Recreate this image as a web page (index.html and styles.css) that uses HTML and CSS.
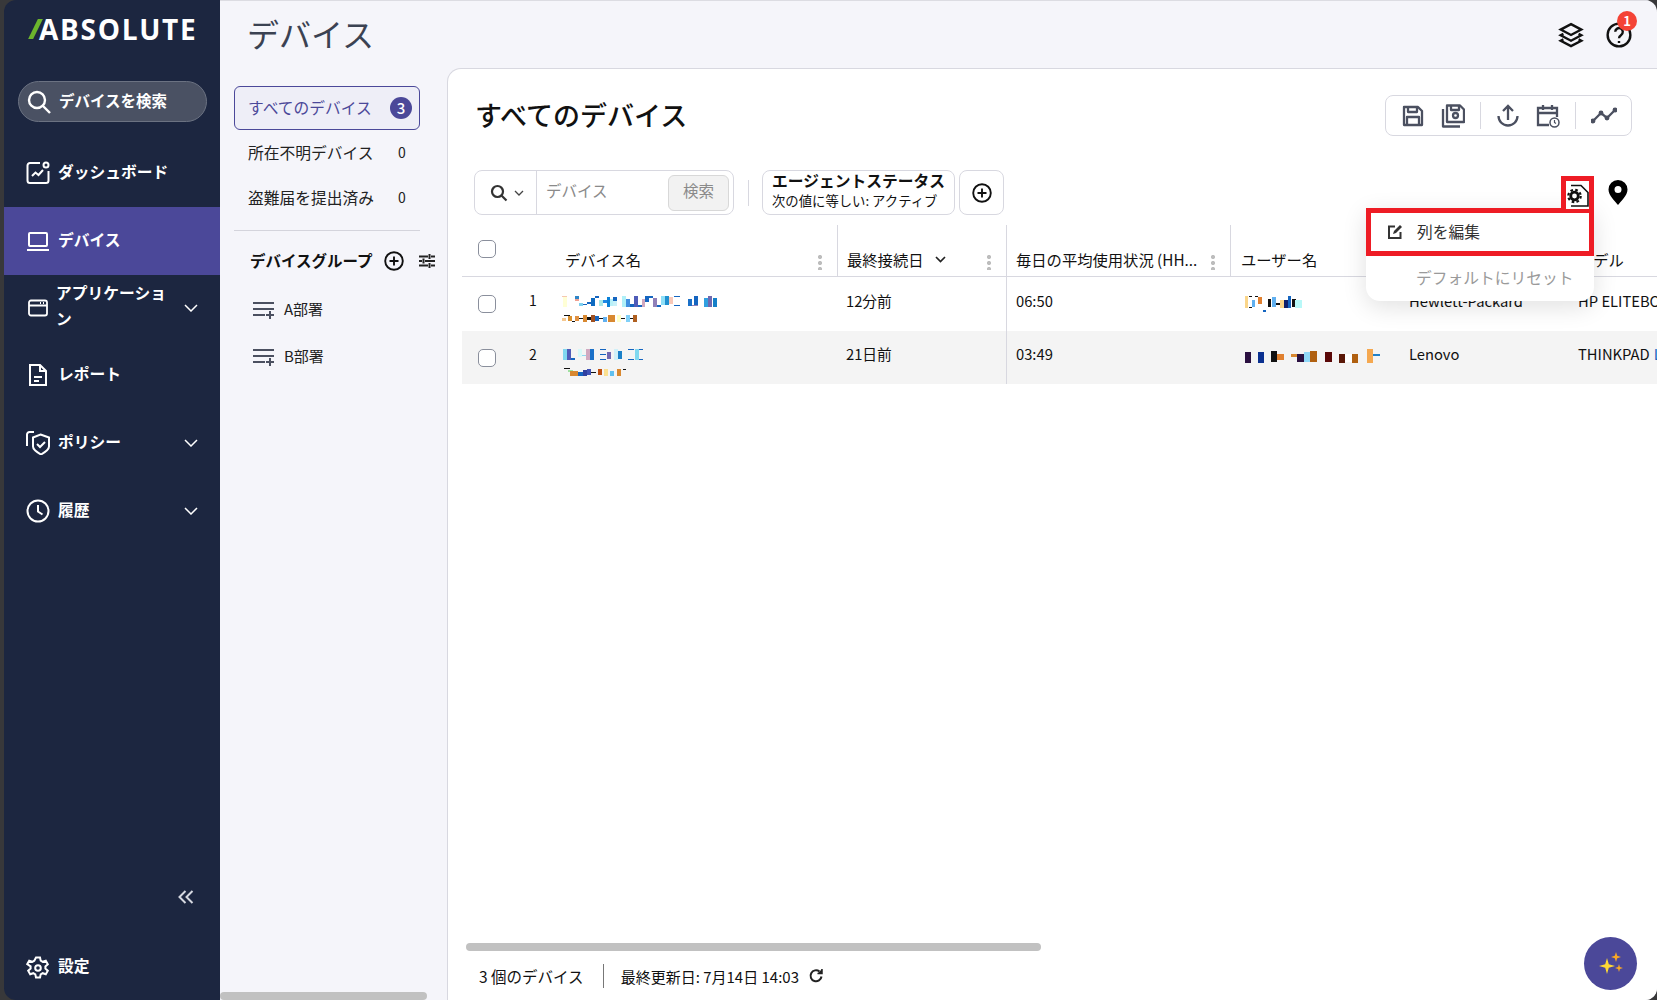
FILE: index.html
```html
<!DOCTYPE html>
<html lang="ja">
<head>
    <meta charset="UTF-8">
    <title>デバイス</title>
    <link rel="stylesheet" href="styles.css">
</head>
<body>
    <div class="window">
        <!-- Sidebar -->
        <aside class="sidebar">
            <div class="logo"><span class="logo-slash"></span><span>ABSOLUTE</span></div>
            <div class="side-search">
                <svg width="26" height="26" viewBox="0 0 26 26" fill="none" stroke="#fff" stroke-width="2.4"><circle cx="11" cy="11" r="8"/><path d="M17 17l7 7"/></svg>
                <span>デバイスを検索</span>
            </div>
            <nav class="nav">
                <a class="nav-item">
                    <svg class="nav-icon" viewBox="0 0 24 24" fill="none" stroke="#fff" stroke-width="2"><path d="M14 2H4a2.500 2.500 0 0 0-2.500 2.500v15A2.500 2.500 0 0 0 4 22h16a2.500 2.500 0 0 0 2.500-2.500V10"/><circle cx="20" cy="4" r="2.500"/><path d="M6 15l3.500-3.500 3 2.500 4.500-5"/></svg>
                    <span class="nav-label">ダッシュボード</span>
                </a>
                <a class="nav-item active">
                    <svg class="nav-icon" viewBox="0 0 24 24" fill="none" stroke="#fff" stroke-width="2"><rect x="3" y="4" width="18" height="13" rx="1"/><path d="M1 21h22"/></svg>
                    <span class="nav-label">デバイス</span>
                </a>
                <a class="nav-item app-item">
                    <svg class="nav-icon" viewBox="0 0 24 24" fill="none" stroke="#fff" stroke-width="1.800"><rect x="3" y="4.500" width="18" height="15" rx="2"/><path d="M3 9.500h18M14 7h1M17 7h1"/></svg>
                    <span class="nav-label">アプリケーション</span>
                    <svg class="chevron" viewBox="0 0 14 8" fill="none" stroke="#fff" stroke-width="1.500"><path d="M1 1l6 6 6-6"/></svg>
                </a>
                <a class="nav-item">
                    <svg class="nav-icon" viewBox="0 0 24 24" fill="none" stroke="#fff" stroke-width="2"><path d="M4 2h10l6 6v14H4zM14 2v6h6M8 14h8M8 18h5"/></svg>
                    <span class="nav-label">レポート</span>
                </a>
                <a class="nav-item">
                    <svg class="nav-icon" viewBox="0 0 24 24" fill="none" stroke="#fff" stroke-width="2"><path d="M14.500 3.500L23 6.500v9c0 3-3.500 5.500-8 8-4.500-2.500-8-5-8-8v-9z"/><path d="M11 13l3 3 5-5"/><path d="M8 1H3.500A2.500 2.500 0 0 0 1 3.500V15"/></svg>
                    <span class="nav-label">ポリシー</span>
                    <svg class="chevron" viewBox="0 0 14 8" fill="none" stroke="#fff" stroke-width="1.500"><path d="M1 1l6 6 6-6"/></svg>
                </a>
                <a class="nav-item">
                    <svg class="nav-icon" viewBox="0 0 24 24" fill="none" stroke="#fff" stroke-width="2"><circle cx="12" cy="12" r="10.500"/><path d="M12 6v6.500l4.500 3"/></svg>
                    <span class="nav-label">履歴</span>
                    <svg class="chevron" viewBox="0 0 14 8" fill="none" stroke="#fff" stroke-width="1.500"><path d="M1 1l6 6 6-6"/></svg>
                </a>
            </nav>
            <div class="side-bottom">
                <svg class="collapse" width="16" height="14" viewBox="0 0 16 14" fill="none" stroke="#d5d8e0" stroke-width="2"><path d="M7.500 1L1.500 7l6 6M14.500 1l-6 6 6 6"/></svg>
                <a class="nav-item settings">
                    <svg class="nav-icon" viewBox="0 0 24 24" fill="none" stroke="#fff" stroke-width="2"><path d="M10 1.500h4l.7 3.200 2 1.100 3.100-1 2 3.400-2.400 2.200v2.200l2.400 2.200-2 3.400-3.100-1-2 1.100-.7 3.200h-4l-.7-3.200-2-1.100-3.100 1-2-3.400 2.400-2.200v-2.200L1.200 8.200l2-3.400 3.100 1 2-1.100z"/><circle cx="12" cy="12" r="2.800"/></svg>
                    <span class="nav-label">設定</span>
                </a>
            </div>
        </aside>

        <div class="content">
            <!-- Top bar -->
            <header class="topbar">
                <h1>デバイス</h1>
                <div class="top-icons">
                    <svg width="26" height="26" viewBox="0 0 24 24" fill="none" stroke="#111" stroke-width="2.200"><path d="M12 2l9.500 5-9.500 5-9.500-5z"/><path d="M5 11l-2.500 1.300 9.500 5 9.500-5L19 11"/><path d="M5 16l-2.500 1.300 9.500 5 9.500-5L19 16"/></svg>
                    <div class="help">
                        <svg width="26" height="26" viewBox="0 0 24 24" fill="none" stroke="#111" stroke-width="2.200"><circle cx="12" cy="12" r="10.500"/><path d="M8.500 9a3.500 3.500 0 1 1 5.500 3c-1.300.9-2 1.500-2 3"/><path d="M12 17.500v1.800"/></svg>
                        <span class="help-badge">1</span>
                    </div>
                </div>
            </header>

            <div class="content-body">
                <!-- Device list panel -->
                <div class="subnav">
                    <div class="sub-item selected"><span class="sub-text">すべてのデバイス</span><span class="count-badge">3</span></div>
                    <div class="sub-item"><span class="sub-text">所在不明デバイス</span><span class="count">0</span></div>
                    <div class="sub-item"><span class="sub-text">盗難届を提出済み</span><span class="count">0</span></div>
                    <div class="sub-divider"></div>
                    <div class="group-head">
                        <span class="group-text">デバイスグループ</span>
                        <svg width="20" height="20" viewBox="0 0 20 20" fill="none" stroke="#111" stroke-width="1.900"><circle cx="10" cy="10" r="8.800"/><path d="M10 5.500v9M5.500 10h9"/></svg>
                        <svg class="sliders" width="16" height="16" viewBox="0 0 16 16" fill="none" stroke="#222" stroke-width="2"><path d="M0 3.500h9M12 3.500h4M10.500 1v5M0 8h3M6 8h10M4.500 5.500v5M0 12.500h9M12 12.500h4M10.500 10v5"/></svg>
                    </div>
                    <div class="group-item">
                        <svg width="22" height="18" viewBox="0 0 22 18" fill="none" stroke="#4b5060" stroke-width="2"><path d="M0 2h21M0 8h21M0 14h12M17 10v8M13 14h8"/></svg>
                        <span class="group-text">A部署</span>
                    </div>
                    <div class="group-item">
                        <svg width="22" height="18" viewBox="0 0 22 18" fill="none" stroke="#4b5060" stroke-width="2"><path d="M0 2h21M0 8h21M0 14h12M17 10v8M13 14h8"/></svg>
                        <span class="group-text">B部署</span>
                    </div>
                    <div class="panel-scroll"></div>
                </div>

                <!-- Main card -->
                <main class="card">
                    <div class="card-head">
                        <h2>すべてのデバイス</h2>
                        <div class="toolbar">
                            <svg width="24" height="24" viewBox="0 0 24 24" fill="none" stroke="#4b5060" stroke-width="2.300" stroke-linejoin="round"><path d="M3 3h14l4 4v14H3z"/><path d="M7 3v5h9V3M6 21v-8h12v8"/></svg>
                            <svg width="24" height="24" viewBox="0 0 24 24" fill="none" stroke="#4b5060" stroke-width="2.300" stroke-linejoin="round"><path d="M6 1.500h13l4 4V18H6z"/><path d="M10 2v4h8V2"/><circle cx="14.500" cy="11.500" r="2.500"/><path d="M2 5v17.500h17"/></svg>
                            <span class="tool-sep"></span>
                            <svg width="24" height="24" viewBox="0 0 24 24" fill="none" stroke="#4b5060" stroke-width="2.300"><path d="M12 16V2M7 7l5-5 5 5"/><path d="M2.500 12a9.500 9.500 0 0 0 19 0"/></svg>
                            <svg width="24" height="24" viewBox="0 0 24 24" fill="none" stroke="#4b5060" stroke-width="2.300"><path d="M13 21H2V4h19v9M2 9h19M7 1v5M16 1v5"/><circle cx="18.500" cy="18.500" r="4.500" fill="#fff" stroke-width="1.500"/><path d="M18.500 16v2.500l1.500 1" stroke-width="1.200"/></svg>
                            <span class="tool-sep"></span>
                            <svg width="26" height="24" viewBox="0 0 26 24" fill="none" stroke="#4b5060" stroke-width="2.300" stroke-linecap="round"><path d="M2 17l8-8 6 5 8-8"/><circle cx="2" cy="17" r="1.300" fill="#4b5060"/><circle cx="10" cy="9" r="1.300" fill="#4b5060"/><circle cx="16" cy="14" r="1.300" fill="#4b5060"/><circle cx="24" cy="6" r="1.300" fill="#4b5060"/></svg>
                        </div>
                    </div>

                    <div class="filter-row">
                        <div class="search-box">
                            <div class="search-type">
                                <svg width="18" height="18" viewBox="0 0 18 18" fill="none" stroke="#333" stroke-width="2.200"><circle cx="7.500" cy="7.500" r="5.500"/><path d="M11.500 11.500l5 5"/></svg>
                                <svg width="10" height="6" viewBox="0 0 10 6" fill="none" stroke="#444" stroke-width="1.300"><path d="M1 1l4 4 4-4"/></svg>
                            </div>
                            <span class="search-input">デバイス</span>
                            <button class="search-btn">検索</button>
                        </div>
                        <span class="filter-sep"></span>
                        <div class="chip">
                            <strong>エージェントステータス</strong>
                            <span>次の値に等しい: アクティブ</span>
                        </div>
                        <div class="chip-add">
                            <svg width="20" height="20" viewBox="0 0 20 20" fill="none" stroke="#111" stroke-width="1.900"><circle cx="10" cy="10" r="8.800"/><path d="M10 5.500v9M5.500 10h9"/></svg>
                        </div>
                        <div class="filter-right">
                            <div class="gear-wrap">
                                <svg width="23" height="23" viewBox="0 0 23 23" fill="none" stroke="#111" stroke-width="1.600"><path d="M5 1.500h10l7 7v13.500H5"/><circle cx="8.500" cy="12" r="8" fill="#fff" stroke="none"/><circle cx="8.500" cy="12" r="3.800" stroke-width="2.800"/><circle cx="8.500" cy="12" r="6.200" stroke-width="2.200" stroke-dasharray="2.600 2.270"/></svg>
                            </div>
                            <svg class="pin" width="20" height="25" viewBox="0 0 20 25"><path fill-rule="evenodd" fill="#000" d="M10 0a9.500 9.500 0 0 1 9.500 9.500C19.500 15.500 13 21 10 25 7 21 .5 15.500.5 9.500A9.500 9.500 0 0 1 10 0zm0 6a3.500 3.500 0 1 0 0 7 3.500 3.500 0 0 0 0-7z"/></svg>
                        </div>
                    </div>

                    <div class="table">
                        <div class="tr th">
                            <div class="td check"><span class="box"></span></div>
                            <div class="td"></div>
                            <div class="td name-head">デバイス名<span class="dots"></span></div>
                            <div class="td sep col-last">最終接続日
                                <svg class="sort" width="11" height="7" viewBox="0 0 11 7" fill="none" stroke="#222" stroke-width="1.700"><path d="M1 1l4.500 4.500L10 1"/></svg>
                                <span class="dots"></span>
                            </div>
                            <div class="td sep col-avg">毎日の平均使用状況 (HH...<span class="dots"></span></div>
                            <div class="td sep col-user">ユーザー名</div>
                            <div class="td col-maker">メーカー</div>
                            <div class="td col-model">モデル</div>
                        </div>
                        <div class="tr">
                            <div class="td check"><span class="box"></span></div>
                            <div class="td num">1</div>
                            <div class="td">
                                <div class="masked">
                                    <svg width="164" height="11" viewBox="0 0 164 11"><rect x="3" y="0" width="4" height="11" fill="#ffffd6"/><rect x="0" y="0" width="7" height="1" fill="#f5c8b0"/><rect x="15" y="0" width="4" height="3" fill="#2e86c8"/><rect x="15" y="3" width="4" height="2" fill="#f0a090"/><rect x="19" y="7" width="4" height="3" fill="#7fd0f0"/><rect x="23" y="8" width="4" height="1" fill="#1565c0"/><rect x="27" y="6" width="4" height="2" fill="#1565c0"/><rect x="31" y="2" width="4" height="8" fill="#0d6ac0"/><rect x="35" y="0" width="4" height="2" fill="#1565c0"/><rect x="39" y="4" width="4" height="6" fill="#a8e8e8"/><rect x="43" y="4" width="4" height="3" fill="#1e88e5"/><rect x="47" y="1" width="3" height="10" fill="#0a80d8"/><rect x="50" y="3" width="3" height="7" fill="#b8f0f8"/><rect x="53" y="1" width="4" height="4" fill="#1565c0"/><rect x="53" y="5" width="4" height="5" fill="#c8f0f8"/><rect x="62" y="0" width="4" height="11" fill="#b0f0f8"/><rect x="66" y="3" width="4" height="8" fill="#4090e0"/><rect x="70" y="8" width="4" height="3" fill="#1565c0"/><rect x="74" y="0" width="4" height="11" fill="#4f5cb8"/><rect x="78" y="9" width="4" height="2" fill="#1565c0"/><rect x="82" y="3" width="3" height="8" fill="#d0a8c0"/><rect x="85" y="0" width="4" height="6" fill="#1565c0"/><rect x="89" y="0" width="4" height="2" fill="#1565c0"/><rect x="93" y="2" width="4" height="9" fill="#9080b8"/><rect x="97" y="9" width="4" height="2" fill="#1565c0"/><rect x="101" y="0" width="4" height="9" fill="#90e0f8"/><rect x="105" y="0" width="4" height="9" fill="#2090d0"/><rect x="109" y="1" width="4" height="7" fill="#f8c8b8"/><rect x="114" y="0" width="6" height="1" fill="#1565c0"/><rect x="114" y="9" width="6" height="1" fill="#1565c0"/><rect x="128" y="3" width="4" height="7" fill="#1a70c8"/><rect x="132" y="9" width="6" height="1" fill="#9080b8"/><rect x="134" y="0" width="4" height="9" fill="#1565c0"/><rect x="144" y="2" width="4" height="9" fill="#30a0e0"/><rect x="148" y="0" width="4" height="11" fill="#7068b0"/><rect x="153" y="2" width="4" height="9" fill="#1580c8"/></svg>
                                    <svg width="80" height="8" viewBox="0 0 80 8"><rect x="0" y="3" width="6" height="3" fill="#f5c890"/><rect x="4" y="0" width="6" height="1" fill="#111"/><rect x="8" y="1" width="4" height="5" fill="#d89030"/><rect x="12" y="6" width="3" height="1" fill="#111"/><rect x="15" y="1" width="4" height="5" fill="#e09040"/><rect x="19" y="3" width="4" height="1" fill="#111"/><rect x="23" y="0" width="4" height="7" fill="#d88830"/><rect x="27" y="2" width="4" height="3" fill="#111"/><rect x="31" y="0" width="4" height="7" fill="#a05020"/><rect x="35" y="1" width="4" height="5" fill="#1565c0"/><rect x="39" y="3" width="4" height="1" fill="#111"/><rect x="43" y="2" width="4" height="5" fill="#60b0f0"/><rect x="48" y="0" width="7" height="7" fill="#d88830"/><rect x="57" y="0" width="4" height="7" fill="#ffffc8"/><rect x="61" y="3" width="4" height="1" fill="#111"/><rect x="66" y="0" width="4" height="7" fill="#80d0f8"/><rect x="70" y="3" width="3" height="1" fill="#111"/><rect x="73" y="0" width="4" height="7" fill="#b06020"/></svg>
                                </div>
                            </div>
                            <div class="td col-last">12分前</div>
                            <div class="td sep col-avg">06:50</div>
                            <div class="td col-user">
                                <svg class="masked-user" width="60" height="16" viewBox="0 0 60 16"><rect x="0" y="0" width="3" height="12" fill="#fbd68a"/><rect x="4" y="0" width="3" height="1" fill="#111"/><rect x="4" y="11" width="3" height="1" fill="#111"/><rect x="7" y="4" width="3" height="7" fill="#60b0f0"/><rect x="10" y="0" width="3" height="1" fill="#111"/><rect x="13" y="1" width="4" height="7" fill="#e08030"/><rect x="18" y="14" width="3" height="2" fill="#1565c0"/><rect x="23" y="3" width="3" height="8" fill="#111"/><rect x="27" y="1" width="4" height="10" fill="#60b0f0"/><rect x="31" y="7" width="4" height="2" fill="#111"/><rect x="35" y="4" width="4" height="8" fill="#fbd68a"/><rect x="39" y="4" width="4" height="8" fill="#10206a"/><rect x="43" y="0" width="3" height="12" fill="#1565c0"/><rect x="47" y="3" width="4" height="8" fill="#111"/><rect x="50" y="4" width="7" height="8" fill="#b8f8f8"/></svg>
                            </div>
                            <div class="td col-maker">Hewlett-Packard</div>
                            <div class="td col-model">HP ELITEBOOK</div>
                        </div>
                        <div class="tr alt">
                            <div class="td check"><span class="box"></span></div>
                            <div class="td num">2</div>
                            <div class="td">
                                <div class="masked">
                                    <svg width="84" height="11" viewBox="0 0 84 11"><rect x="3" y="0" width="4" height="11" fill="#80d8f0"/><rect x="7" y="0" width="4" height="11" fill="#4f5cb8"/><rect x="11" y="9" width="4" height="2" fill="#1565c0"/><rect x="18" y="0" width="4" height="8" fill="#d8f8f8"/><rect x="22" y="6" width="4" height="1" fill="#90d8f0"/><rect x="26" y="0" width="4" height="11" fill="#d0a8c0"/><rect x="30" y="0" width="4" height="11" fill="#1a70c8"/><rect x="40" y="0" width="6" height="1" fill="#1565c0"/><rect x="40" y="5" width="6" height="1" fill="#1565c0"/><rect x="40" y="10" width="6" height="1" fill="#1565c0"/><rect x="47" y="3" width="4" height="7" fill="#7068b0"/><rect x="54" y="0" width="4" height="11" fill="#d0f0f8"/><rect x="58" y="2" width="4" height="8" fill="#1a80c8"/><rect x="68" y="0" width="6" height="1" fill="#1565c0"/><rect x="68" y="10" width="6" height="1" fill="#1565c0"/><rect x="75" y="0" width="4" height="11" fill="#80d8f0"/><rect x="79" y="0" width="4" height="1" fill="#1565c0"/><rect x="79" y="10" width="4" height="1" fill="#1565c0"/></svg>
                                    <svg width="66" height="8" viewBox="0 0 66 8"><rect x="4" y="0" width="6" height="1" fill="#111"/><rect x="8" y="2" width="5" height="2" fill="#a0e0a0"/><rect x="10" y="3" width="8" height="5" fill="#d88830"/><rect x="18" y="4" width="5" height="4" fill="#1565c0"/><rect x="23" y="2" width="4" height="6" fill="#3040a0"/><rect x="27" y="1" width="4" height="6" fill="#3f51b5"/><rect x="31" y="4" width="5" height="1" fill="#111"/><rect x="38" y="1" width="4" height="6" fill="#c05010"/><rect x="44" y="1" width="4" height="7" fill="#fbe090"/><rect x="50" y="3" width="4" height="5" fill="#60c0f0"/><rect x="57" y="1" width="4" height="7" fill="#d88830"/><rect x="63" y="1" width="3" height="1" fill="#111"/></svg>
                                </div>
                            </div>
                            <div class="td col-last">21日前</div>
                            <div class="td sep col-avg">03:49</div>
                            <div class="td col-user">
                                <svg class="masked-user" width="136" height="16" viewBox="0 0 136 16"><rect x="0" y="3" width="6" height="11" fill="#2a1040"/><rect x="13" y="3" width="6" height="11" fill="#0a3090"/><rect x="26" y="2" width="6" height="11" fill="#111"/><rect x="32" y="5" width="7" height="6" fill="#e08030"/><rect x="46" y="5" width="6" height="3" fill="#d88830"/><rect x="52" y="5" width="7" height="8" fill="#2a1040"/><rect x="59" y="3" width="6" height="10" fill="#90d8f8"/><rect x="65" y="2" width="7" height="11" fill="#b06010"/><rect x="80" y="3" width="7" height="10" fill="#5a0808"/><rect x="94" y="5" width="6" height="9" fill="#5a1808"/><rect x="100" y="5" width="7" height="8" fill="#fff"/><rect x="107" y="5" width="6" height="9" fill="#b06010"/><rect x="122" y="0" width="6" height="14" fill="#f5a850"/><rect x="128" y="5" width="7" height="2" fill="#2080c8"/></svg>
                            </div>
                            <div class="td col-maker">Lenovo</div>
                            <div class="td col-model">THINKPAD <span class="link">L</span></div>
                        </div>
                    </div>

                    <div class="h-scroll"></div>
                    <div class="card-foot">
                        <span>3 個のデバイス</span>
                        <span class="foot-sep"></span>
                        <span class="foot-date">最終更新日: 7月14日 14:03</span>
                        <svg width="16" height="16" viewBox="0 0 16 16" fill="none" stroke="#222" stroke-width="2"><path d="M13.500 8.500A5.500 5.500 0 1 1 11.500 3.500"/><path d="M9.500 5.500h4.500V1" stroke-width="1.500" fill="#222"/></svg>
                    </div>

                    <!-- Column menu, lies over the table -->
                    <div class="col-menu">
                        <div class="menu-row highlight">
                            <svg width="16" height="16" viewBox="0 0 16 16" fill="none" stroke="#333" stroke-width="2"><path d="M8 2.500H2v11.500h11.500V8"/><path d="M6 10l1-3 6-6 2 2-6 6z" fill="#333" stroke="none"/></svg>
                            <span>列を編集</span>
                        </div>
                        <div class="menu-row disabled"><span>デフォルトにリセット</span></div>
                    </div>

                    <div class="fab">
                        <svg width="30" height="30" viewBox="0 0 30 30"><path fill="#fdd835" d="M11 9l1.800 6.200L19 17l-6.200 1.800L11 25l-1.800-6.200L3 17l6.200-1.800z"/><path fill="#f9a825" d="M20 3l1.200 3.800L25 8l-3.800 1.200L20 13l-1.200-3.800L15 8l3.800-1.200zM23 15l.9 3.100L27 19l-3.100.9L23 23l-.9-3.100L19 19l3.100-.9z"/></svg>
                    </div>
                </main>
            </div>
        </div>
    </div>
</body>
</html>
```

FILE: styles.css
```css
* {
    box-sizing: border-box;
}

body {
    margin: 0;
    height: 1000px;
    overflow: hidden;
    background-color: #38383a;
    font-family: "Noto Sans CJK JP", "Noto Sans", sans-serif;
    color: #111;
}

.window {
    display: flex;
    height: 1000px;
    margin-left: 4px;
    border-radius: 12px;
    overflow: hidden;
}

/* Sidebar */
.sidebar {
    width: 216px;
    flex-shrink: 0;
    display: flex;
    flex-direction: column;
    background-color: #1c2640;
    color: #fff;
}

.logo {
    display: flex;
    align-items: center;
    height: 26px;
    margin: 16px 0 0 26px;
    font-family: "Open Sans", sans-serif;
    font-size: 28px;
    font-weight: 700;
    letter-spacing: 1.700px;
}

.logo-slash {
    width: 5px;
    height: 20px;
    margin: 0 1px 0 3px;
    background-color: #6cb52d;
    transform: skewX(-26deg);
}

.side-search {
    display: flex;
    align-items: center;
    gap: 7px;
    height: 41px;
    margin: 39px 13px 0 14px;
    padding-left: 7px;
    background-color: #4a5163;
    border: 1px solid #6b7282;
    border-radius: 21px;
    font-size: 15.500px;
    font-weight: 700;
}

    .side-search span {
        padding-bottom: 3px;
    }

.nav {
    margin-top: 17px;
}

.nav-item {
    display: flex;
    align-items: center;
    height: 68px;
    padding-left: 22px;
    font-size: 15.750px;
    font-weight: 700;
}

    .nav-item.active {
        background-color: #4b4899;
    }

    .nav-item.app-item {
        height: 66px;
    }

        .nav-item.app-item .nav-label {
            margin-left: -2px;
            line-height: 26px;
        }

.nav-icon {
    width: 24px;
    height: 24px;
    flex-shrink: 0;
    margin-right: 8px;
}

.nav-label {
    flex: 1;
    min-width: 0;
    padding-bottom: 4px;
}

.chevron {
    width: 14px;
    height: 8px;
    flex-shrink: 0;
    margin: 0 22px 0 10px;
}

.side-bottom {
    margin-top: auto;
    display: flex;
    flex-direction: column;
}

.collapse {
    align-self: flex-end;
    margin: 0 26px 36px 0;
}

.nav-item.settings {
    height: 60px;
    padding-bottom: 5px;
}

/* Top bar */
.content {
    flex: 1;
    min-width: 0;
    display: flex;
    flex-direction: column;
    background-color: #f5f5fa;
    border-top: 1px solid #dcdce2;
}

.topbar {
    display: flex;
    justify-content: space-between;
    align-items: center;
    height: 67px;
    padding: 0 25px 0 27px;
}

    .topbar h1 {
        margin: 0;
        padding-bottom: 3px;
        font-size: 32px;
        font-weight: 400;
        color: #3b4252;
    }

.top-icons {
    display: flex;
    align-items: center;
    gap: 22px;
}

.help {
    position: relative;
    height: 26px;
}

.help-badge {
    position: absolute;
    top: -11px;
    left: 11px;
    width: 20px;
    height: 20px;
    border-radius: 50%;
    background-color: #f44336;
    color: #fff;
    font-size: 13px;
    font-weight: 700;
    line-height: 20px;
    text-align: center;
}

.content-body {
    flex: 1;
    min-height: 0;
    display: flex;
}

/* Device list panel */
.subnav {
    width: 227px;
    flex-shrink: 0;
    display: flex;
    flex-direction: column;
    padding-top: 18px;
}

.sub-text {
    padding-bottom: 1px;
}

.group-text {
    padding-bottom: 3px;
}

.sub-item {
    display: flex;
    justify-content: space-between;
    align-items: center;
    width: 186px;
    height: 45px;
    margin-left: 14px;
    padding: 0 7px 0 14px;
    font-size: 15.750px;
    color: #222;
}

    .sub-item.selected {
        height: 44px;
        padding-left: 13px;
        background-color: #eeeef7;
        border: 1px solid #4b4899;
        border-radius: 6px;
        color: #4b4899;
    }

.count-badge {
    width: 22px;
    height: 22px;
    border-radius: 50%;
    background-color: #4b4899;
    color: #fff;
    font-size: 15px;
    font-weight: 500;
    line-height: 21px;
    text-align: center;
}

.count {
    width: 22px;
    padding-bottom: 1px;
    font-size: 14px;
    text-align: center;
}

.sub-divider {
    width: 186px;
    height: 1px;
    margin: 10px 0 0 14px;
    background-color: #d4d4dc;
}

.group-head {
    display: flex;
    align-items: center;
    height: 30px;
    margin: 15px 0 0 14px;
    padding-left: 16px;
    font-size: 15.500px;
    font-weight: 700;
}

    .group-head svg {
        margin-left: 11px;
        flex-shrink: 0;
    }

    .group-head .sliders {
        margin-left: 15px;
    }

.group-item {
    display: flex;
    align-items: center;
    gap: 9px;
    height: 47px;
    margin-left: 33px;
    font-size: 15px;
    color: #222;
}

    .group-head + .group-item {
        margin-top: 10px;
    }

.panel-scroll {
    width: 207px;
    height: 8px;
    margin-top: auto;
    border-radius: 4px;
    background-color: #c1c1c1;
}

/* Main card */
.card {
    position: relative;
    flex: 1;
    min-width: 0;
    display: flex;
    flex-direction: column;
    overflow: hidden;
    background-color: #fff;
    border-left: 1px solid #d8d8e0;
    border-top: 1px solid #d8d8e0;
    border-top-left-radius: 14px;
}

.card-head {
    display: flex;
    justify-content: space-between;
    align-items: flex-start;
    height: 101px;
    padding: 26px 25px 0 27px;
}

    .card-head h2 {
        margin: 0;
        padding-bottom: 4px;
        font-size: 27px;
        font-weight: 500;
        line-height: 40px;
    }

.toolbar {
    display: flex;
    align-items: center;
    gap: 16px;
    height: 41px;
    padding: 0 14px 0 15px;
    border: 1px solid #d8d8e0;
    border-radius: 8px;
}

.tool-sep {
    width: 1px;
    height: 27px;
    margin: 0 -1px;
    background-color: #d8d8e0;
}

.filter-row {
    display: flex;
    align-items: center;
    height: 45px;
    padding-left: 26px;
}

.search-box {
    display: flex;
    align-items: center;
    width: 260px;
    height: 45px;
    border: 1px solid #d8d8e0;
    border-radius: 8px;
}

.search-type {
    display: flex;
    align-items: center;
    gap: 6px;
    width: 62px;
    height: 100%;
    padding-left: 15px;
    border-right: 1px solid #d8d8e0;
}

.search-input {
    flex: 1;
    padding: 0 0 6px 9px;
    font-size: 15.500px;
    color: #8a8a8a;
}

.search-btn {
    width: 61px;
    height: 36px;
    margin-right: 4px;
    padding: 0 0 5px;
    background-color: #f2f2f2;
    border: 1px solid #d8d8d8;
    border-radius: 6px;
    font-family: inherit;
    font-size: 15.500px;
    color: #8a8a8a;
}

.filter-sep {
    width: 1px;
    height: 26px;
    margin: 0 13px 0 14px;
    background-color: #d8d8e0;
}

.chip {
    display: flex;
    flex-direction: column;
    justify-content: center;
    width: 193px;
    height: 45px;
    padding: 0 0 3px 9px;
    border: 1px solid #d8d8e0;
    border-radius: 8px;
    font-size: 13.350px;
    line-height: 20px;
}

    .chip strong {
        font-size: 15.750px;
    }

.chip-add {
    display: flex;
    justify-content: center;
    align-items: center;
    width: 45px;
    height: 45px;
    margin-left: 4px;
    border: 1px solid #d8d8e0;
    border-radius: 8px;
}

.filter-right {
    display: flex;
    align-items: center;
    gap: 14px;
    margin-left: auto;
    padding-right: 29px;
}

.gear-wrap {
    position: relative;
    z-index: 2;
    display: flex;
    justify-content: center;
    align-items: center;
    width: 33px;
    height: 33px;
    border: 5px solid #ee1c25;
    border-bottom: 0;
    background-color: #fff;
}

/* Table */
.table {
    margin: 10px 0 0 14px;
    width: 1300px;
    font-size: 14.750px;
}

.tr {
    display: grid;
    grid-template-columns: 50px 50px 275px 169px 224px 170px 170px 192px;
    height: 54px;
}

    .tr .td {
        padding-bottom: 8px;
    }

    .tr.th {
        height: 52px;
        border-bottom: 1px solid #d8d8e0;
        font-size: 15.300px;
    }

        .tr.th .td {
            align-items: flex-end;
            padding-bottom: 6px;
        }

    .tr.alt {
        height: 53px;
        background-color: #f4f4f4;
    }

.td {
    position: relative;
    display: flex;
    align-items: center;
    min-width: 0;
    white-space: nowrap;
    overflow: hidden;
}

    .td.sep {
        border-left: 1px solid #d8d8e0;
    }

.tr.th .check {
    align-items: flex-start;
    padding: 15px 0 0 16px;
}

.tr .check {
    padding: 0 0 0 16px;
}

.box {
    display: block;
    width: 18px;
    height: 18px;
    background-color: #fff;
    border: 1.500px solid #8a8f9c;
    border-radius: 5px;
}

.num {
    padding-left: 17px;
    font-size: 14px;
}

.name-head {
    padding-left: 3px;
}

.masked {
    display: flex;
    flex-direction: column;
    gap: 8px;
    margin: 18px 0 0 -2px;
}

    .masked svg {
        display: block;
    }

.masked-user {
    display: block;
    margin: 7px 0 0 5px;
}

.col-last { padding-left: 9px; }
.col-avg { padding-left: 9px; }
.col-user { padding-left: 10px; }
.col-maker { padding-left: 9px; }
.col-model { padding-left: 8px; }

.sort {
    margin-left: 11px;
    margin-bottom: 7px;
}

.tr.th .dots {
    position: absolute;
    right: 15px;
    bottom: 6px;
    width: 4px;
    height: 16px;
    background-image: radial-gradient(circle, #bdbdbd 2px, transparent 2.200px);
    background-size: 4px 6px;
}

.link {
    margin-left: 4px;
    color: #1565c0;
}

.h-scroll {
    width: 575px;
    height: 8px;
    margin: auto 0 0 18px;
    border-radius: 4px;
    background-color: #c1c1c1;
}

.card-foot {
    display: flex;
    align-items: center;
    height: 49px;
    padding: 1px 0 0 31px;
    font-size: 15.500px;
}

.foot-date {
    font-size: 15px;
}

.foot-sep {
    width: 1px;
    height: 24px;
    margin: 0 17px 0 19px;
    background-color: #777;
}

.card-foot svg {
    margin-left: 9px;
}

/* Column menu */
.col-menu {
    position: absolute;
    top: 139px;
    left: 918px;
    width: 228px;
    height: 93px;
    background-color: #fff;
    border-radius: 0 0 14px 14px;
    box-shadow: 0 6px 24px rgba(0, 0, 0, 0.12);
    font-size: 15.750px;
}

.menu-row {
    display: flex;
    align-items: center;
    padding-left: 50px;
}

    .menu-row span {
        padding-bottom: 2px;
    }

    .menu-row.highlight {
        gap: 14px;
        height: 48px;
        padding-left: 16px;
        border: 5px solid #ee1c25;
        color: #333;
    }

    .menu-row.disabled {
        height: 45px;
        color: #9a9a9a;
    }

.fab {
    position: absolute;
    right: 20px;
    bottom: 10px;
    display: flex;
    justify-content: center;
    align-items: center;
    width: 53px;
    height: 53px;
    border-radius: 50%;
    background-color: #4b4899;
}
```
